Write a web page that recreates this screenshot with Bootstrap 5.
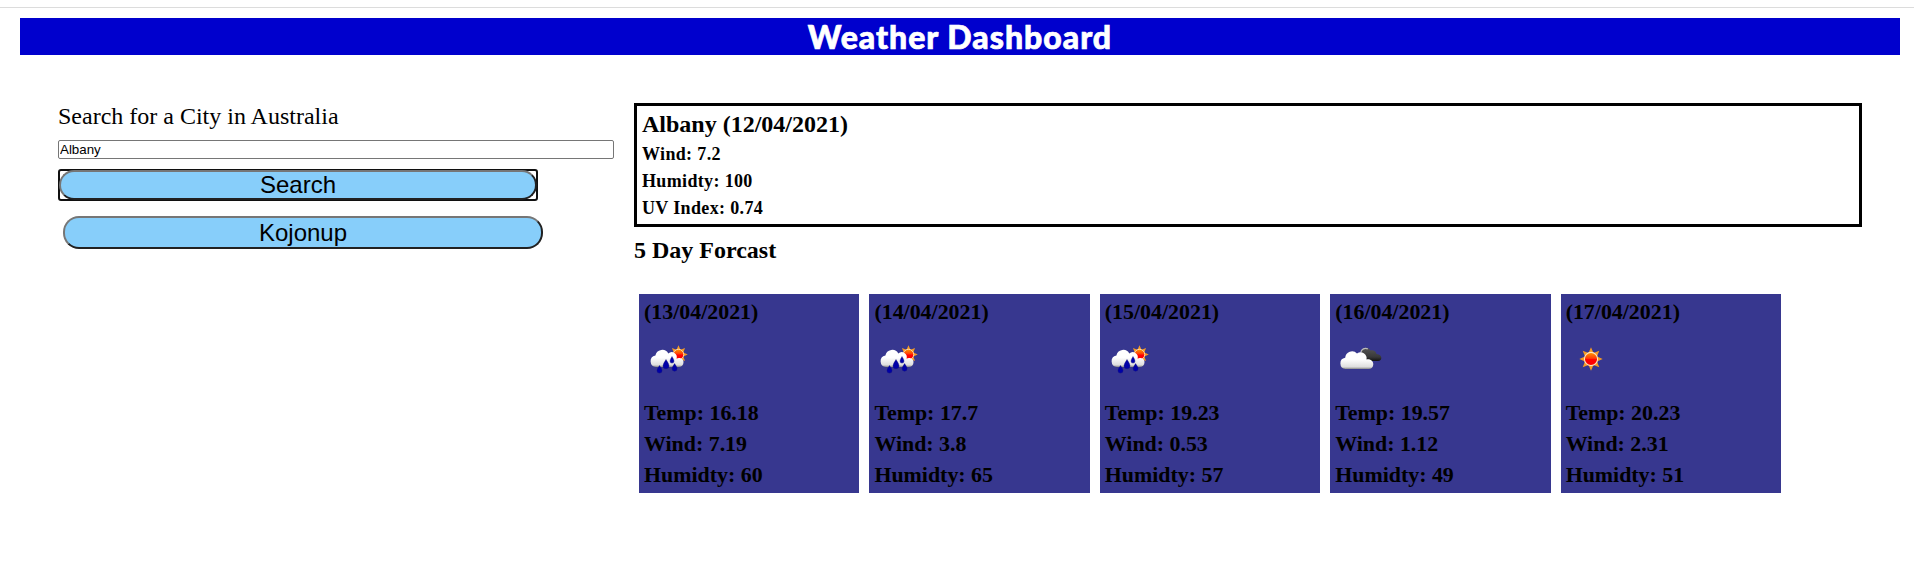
<!DOCTYPE html>
<html lang="en">
<head>
<meta charset="utf-8">
<meta name="viewport" content="width=device-width, initial-scale=1">
<title>Weather Dashboard</title>
<link rel="stylesheet" href="https://cdn.jsdelivr.net/npm/bootstrap@5.3.0/dist/css/bootstrap.min.css">
<style>
  body { font-family: "Liberation Serif", serif; color: #000; background: #fff; }
  .top-rule { height: 8px; border-bottom: 1px solid #dcdcdc; }
  .banner { margin: 10px 14px 0 20px; height: 37px; background: #0000cd; }
  .banner h1 { font: 900 32px/37px Lato, sans-serif; letter-spacing: 1px; color: #fff; -webkit-text-stroke: .7px #fff; }
  .dash { padding: 48px 52px 0 58px; gap: 20px; }
  .search-side { width: 556px; }
  .search-side label { font-size: 24px; line-height: 26px; }
  .city-input { height: 19px; margin-top: 11px; padding: 1px; border: 1px solid #767676; border-radius: 2px; font: 13.333px/15px "Liberation Sans", sans-serif; color: #000; }
  .city-btn { width: 480px; height: 33px; padding: 0; background: #87cefa; border: 2px solid; border-color: #767676 #212121 #212121 #767676; border-radius: 16px; font: 24px/28px "Liberation Sans", sans-serif; color: #000; }
  .focus-frame { width: 480px; height: 32px; margin-top: 10px; border: 2px solid #101010; border-radius: 3px; }
  .focus-frame .city-btn { width: 478px; height: 30px; margin: -1px; line-height: 26px; }
  .recent { margin: 15px 0 0 5px; }
  .today { height: 124px; border: 3px solid #000; padding: 4px 5px; }
  .today h2, .forecast-title { font-size: 24px; font-weight: 700; line-height: 28px; }
  .today h2 { margin-bottom: 3px; }
  .today p { font-size: 18px; font-weight: 700; line-height: 27px; letter-spacing: .35px; }
  .forecast-title { margin-top: 9px; }
  .days { margin: 30px 81px 0 5px; gap: 10px; }
  .day { height: 199px; padding: 2px 5px; background: #37378f; font-size: 21.9px; font-weight: 700; line-height: 31px; }
  .day svg { width: 50px; height: 50px; margin: 7px 0 13px; }
</style>
</head>
<body>
<svg width="0" height="0" class="position-absolute" aria-hidden="true">
  <defs>
    <linearGradient id="white" x1="0" y1="0" x2="0" y2="1"><stop offset=".45" stop-color="#fff"/><stop offset=".88" stop-color="#dedede"/><stop offset="1" stop-color="#888"/></linearGradient>
    <linearGradient id="dark" x1="0" y1="0" x2="0" y2="1"><stop offset="0" stop-color="#555"/><stop offset=".7" stop-color="#383838"/><stop offset="1" stop-color="#111"/></linearGradient>
    <linearGradient id="red" x1="0" y1="0" x2="0" y2="1"><stop offset="0" stop-color="#ff9b00"/><stop offset=".45" stop-color="#ff3b08"/><stop offset=".55" stop-color="#f00"/></linearGradient>
    <symbol id="sunshape" viewBox="-12 -12 24 24">
      <path fill="#f59a23" d="M0-11.7 2.5-6 8.3-8.3 6-2.5 11.7 0 6 2.5 8.3 8.3 2.5 6 0 11.7-2.5 6-8.3 8.3-6 2.5-11.7 0-6-2.5-8.3-8.3-2.500-6z"/>
      <circle r="6.6" fill="url(#red)" stroke="#ffe5bd" stroke-width="1.1"/>
    </symbol>
    <symbol id="sun" viewBox="0 0 50 50"><use href="#sunshape" x="13" y="13" width="24" height="24"/></symbol>
    <symbol id="rain" viewBox="0 0 50 50">
      <use href="#sunshape" x="25" y="11" width="19" height="19"/>
      <path fill="url(#white)" d="M12 33a5.800 5.800 0 0 1-.6-11.500A6.900 6.900 0 0 1 24.300 19.500a5 5 0 0 1 8.200 5.200c2-1.200 7-.8 7 3.500 0 3-2 4.800-5 4.800z"/>
      <g fill="#0000a8" stroke="#10107c" stroke-width=".4">
        <path d="M22 25.500q-3 4.500-3 6.300a3 3 0 0 0 6 0q0-1.800-3-6.300z"/>
        <path d="M28 22.500q-2 3.200-2 4.600a2 2 0 0 0 4 0q0-1.400-2-4.600z"/>
        <path d="M15.500 31.500q-2.500 3.600-2.500 5.100a2.500 2.500 0 0 0 5 0q0-1.500-2.500-5.100z"/>
        <path d="M30.600 29.600q-2.500 3.600-2.500 5.100a2.500 2.500 0 0 0 5 0q0-1.500-2.500-5.100z"/>
      </g>
    </symbol>
    <symbol id="clouds" viewBox="0 0 50 50">
      <path fill="url(#dark)" d="M26 20c0-7 7-8 9.500-3.500 3-.7 5.500 1 6 3.500 6.500.5 6 7 1.500 7H32z"/>
      <path d="M25.800 18.500a4.800 4.800 0 0 1 7-3.600" fill="none" stroke="#bbb" stroke-width="1.300"/>
      <path fill="url(#white)" d="M10.500 35a5.700 5.700 0 0 1-.3-11.300A6.800 6.800 0 0 1 22 19.600a6 6 0 0 1 9.500 5.900c3-.7 6.800 1 6.800 4.800 0 3-2 4.700-4.500 4.700z"/>
    </symbol>
  </defs>
</svg>

<div class="top-rule"></div>
<header class="banner text-center"><h1 class="m-0">Weather Dashboard</h1></header>

<main class="dash d-flex">
  <section class="search-side d-flex flex-column align-items-start flex-shrink-0">
    <label for="city">Search for a City in Australia</label>
    <input id="city" class="city-input w-100" type="text" value="Albany">
    <div class="focus-frame"><button type="button" class="city-btn d-block">Search</button></div>
    <button type="button" class="city-btn recent">Kojonup</button>
  </section>

  <section class="flex-grow-1">
    <div class="today">
      <h2 class="mt-0">Albany (12/04/2021)</h2>
      <p class="m-0">Wind: 7.2</p>
      <p class="m-0">Humidty: 100</p>
      <p class="m-0">UV Index: 0.74</p>
    </div>
    <h2 class="forecast-title mb-0">5 Day Forcast</h2>
    <div class="days d-flex">
      <article class="day flex-fill w-100"><div>(13/04/2021)</div><svg class="d-block"><use href="#rain"/></svg><div>Temp: 16.18</div><div>Wind: 7.19</div><div>Humidty: 60</div></article>
      <article class="day flex-fill w-100"><div>(14/04/2021)</div><svg class="d-block"><use href="#rain"/></svg><div>Temp: 17.7</div><div>Wind: 3.8</div><div>Humidty: 65</div></article>
      <article class="day flex-fill w-100"><div>(15/04/2021)</div><svg class="d-block"><use href="#rain"/></svg><div>Temp: 19.23</div><div>Wind: 0.53</div><div>Humidty: 57</div></article>
      <article class="day flex-fill w-100"><div>(16/04/2021)</div><svg class="d-block"><use href="#clouds"/></svg><div>Temp: 19.57</div><div>Wind: 1.12</div><div>Humidty: 49</div></article>
      <article class="day flex-fill w-100"><div>(17/04/2021)</div><svg class="d-block"><use href="#sun"/></svg><div>Temp: 20.23</div><div>Wind: 2.31</div><div>Humidty: 51</div></article>
    </div>
  </section>
</main>
<script src="https://cdn.jsdelivr.net/npm/bootstrap@5.3.0/dist/js/bootstrap.bundle.min.js"></script>
</body>
</html>
